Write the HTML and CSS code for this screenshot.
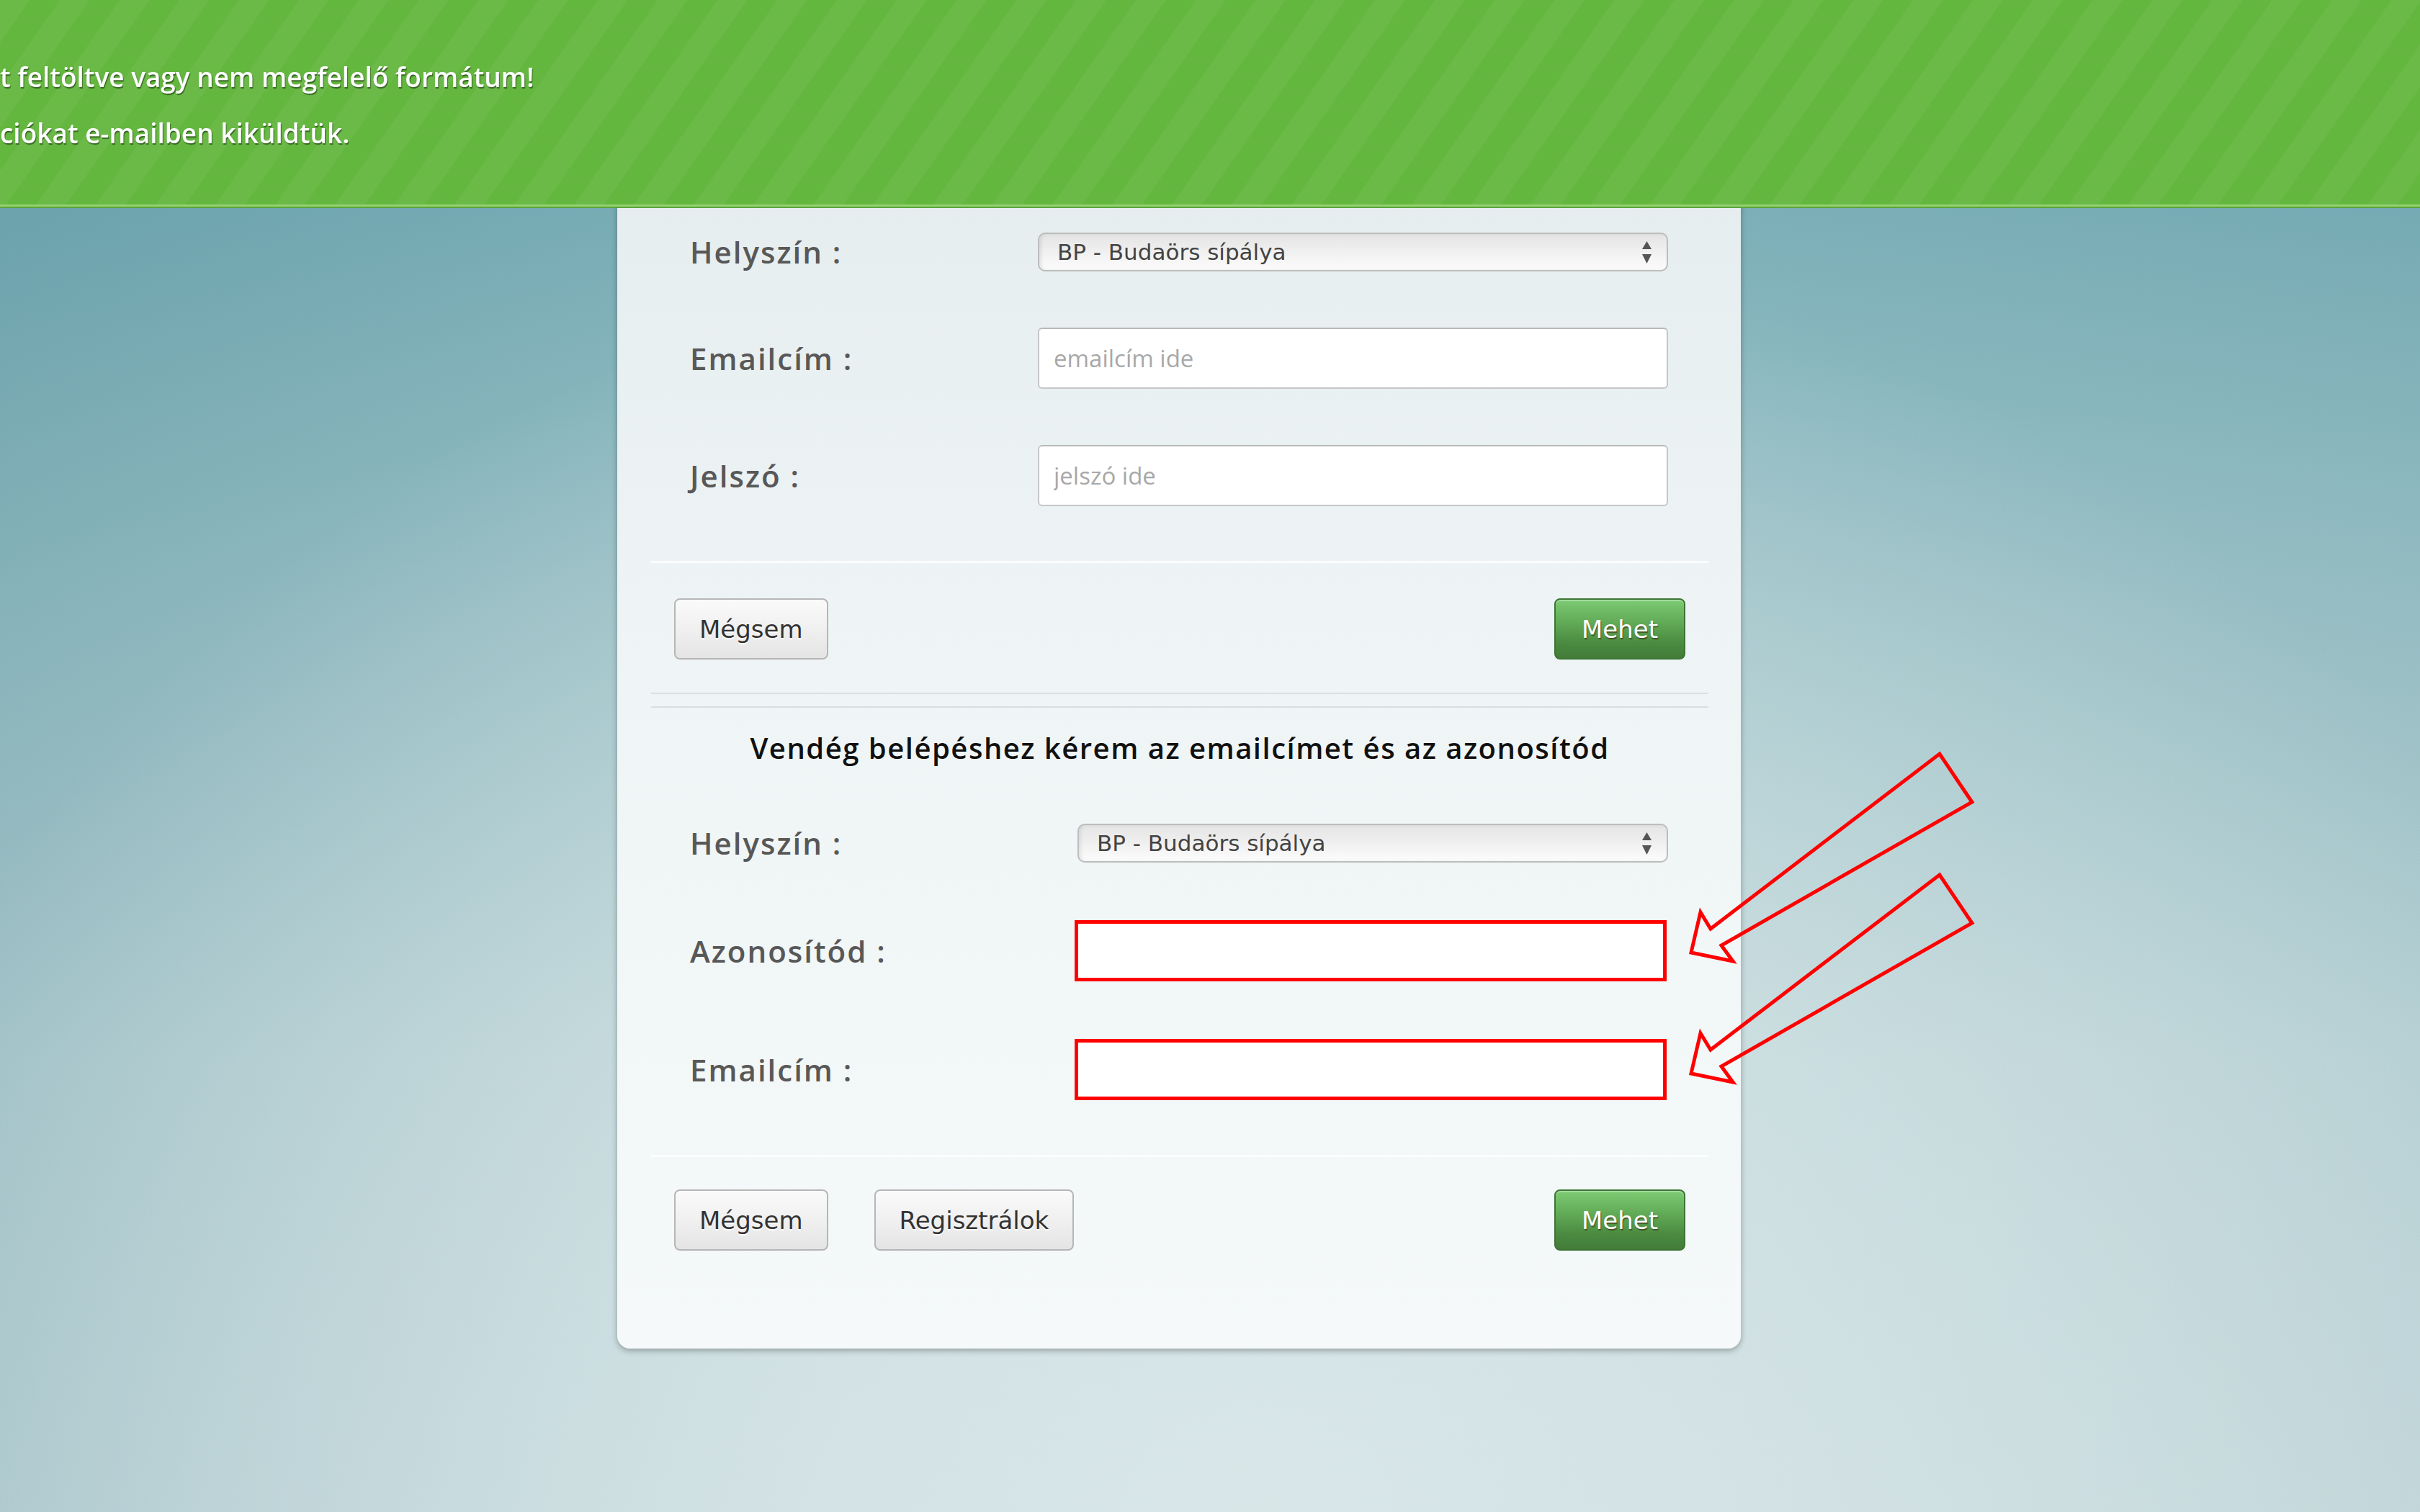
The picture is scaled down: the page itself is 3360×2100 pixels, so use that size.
FILE: index.html
```html
<!DOCTYPE html>
<html>
  <head>
    <meta charset="UTF-8" />
    <title>Belépés</title>
    <link rel="stylesheet" href="styles.css">
  </head>
  <body>
    <!--the notice bar sits over the top of the page-->
    <div class="notice">
      <p>t feltöltve vagy nem megfelelő formátum!</p>
      <p>ciókat e-mailben kiküldtük.</p>
    </div>

    <div class="card">
      <!--normal login-->
      <form class="login">
        <div class="rows">
          <div class="row">
            <label>Helyszín :</label>
            <div class="select">
              <select><option>BP - Budaörs sípálya</option></select>
              <svg class="updown" width="13" height="31" viewBox="0 0 13 31"><path d="M6.5 0 L13 11 L0 11 Z M0 18 L13 18 L6.5 31 Z" fill="#555"/></svg>
            </div>
          </div>
          <div class="row">
            <label>Emailcím :</label>
            <input class="text" type="text" placeholder="emailcím ide" />
          </div>
          <div class="row">
            <label>Jelszó :</label>
            <input class="text" type="password" placeholder="jelszó ide" />
          </div>
        </div>
        <div class="rule"></div>
        <div class="actions">
          <button type="button" class="btn">Mégsem</button>
          <button type="button" class="btn go">Mehet</button>
        </div>
      </form>

      <div class="split"></div>

      <!--guest login-->
      <form class="guest">
        <h2>Vendég belépéshez kérem az emailcímet és az azonosítód</h2>
        <div class="rows">
          <div class="row">
            <label>Helyszín :</label>
            <div class="select">
              <select><option>BP - Budaörs sípálya</option></select>
              <svg class="updown" width="13" height="31" viewBox="0 0 13 31"><path d="M6.5 0 L13 11 L0 11 Z M0 18 L13 18 L6.5 31 Z" fill="#555"/></svg>
            </div>
          </div>
          <div class="row">
            <label>Azonosítód :</label>
            <input class="text marked" type="text" />
          </div>
          <div class="row">
            <label>Emailcím :</label>
            <input class="text marked" type="text" />
          </div>
        </div>
        <div class="rule"></div>
        <div class="actions">
          <button type="button" class="btn">Mégsem</button>
          <button type="button" class="btn">Regisztrálok</button>
          <button type="button" class="btn go">Mehet</button>
        </div>
      </form>
    </div>

    <!--hand drawn arrows pointing at the two guest fields-->
    <svg class="arrows" width="430" height="500" viewBox="0 0 430 500">
      <polygon points="18,293 31,237 45,260 363,17 408,84 60,283 76,305" />
      <polygon points="18,461 31,405 45,428 363,185 408,252 60,451 76,473" />
    </svg>
  </body>
</html>
```

FILE: styles.css
```css
    body {
      margin: 0;
      height: 2100px;
      overflow: hidden;
      font-family: "Open Sans", sans-serif;
      background:
        radial-gradient(ellipse 60% 85% at 52% 100%, rgba(216, 230, 232, 1) 0%, rgba(216, 230, 232, 0) 100%),
        linear-gradient(90deg, rgba(40, 110, 125, 0.2) 0%, rgba(40, 110, 125, 0) 35%, rgba(40, 110, 125, 0) 70%, rgba(40, 110, 125, 0.08) 100%),
        linear-gradient(180deg, #6aa5b0 0%, #9ec3c8 40%, #bfd6d9 70%, #cadcdf 100%);
    }

    /* green notice bar over the top */
    .notice {
      position: fixed;
      top: 0;
      left: 0;
      right: 0;
      height: 287px;
      padding-top: 68px;
      box-sizing: border-box;
      z-index: 5;
      background-color: #63b63e;
      background-image: repeating-linear-gradient(
        125deg,
        rgba(255, 255, 255, 0.05) 0px,
        rgba(255, 255, 255, 0.05) 34px,
        rgba(255, 255, 255, 0) 34px,
        rgba(255, 255, 255, 0) 68px
      );
      border-bottom: 3px solid #93d06f;
      box-shadow: 0 2px 0 #5aa63a;
    }
    .notice p {
      margin: 0;
      font-size: 37px;
      line-height: 78px;
      font-weight: 600;
      color: #fff;
      text-shadow: 1px 2px 1px rgba(0, 0, 0, 0.45);
    }

    /* the login box */
    .card {
      width: 1560px;
      margin-left: 857px;
      padding: 0 45px 136px 47px;
      box-sizing: border-box;
      background: linear-gradient(180deg, #e1eaec 0%, #eef4f5 45%, #f5f9f9 100%);
      border-radius: 0 0 18px 18px;
      box-shadow: 0 3px 8px rgba(0, 0, 0, 0.3);
    }
    .login {
      padding-top: 323px;
    }
    .rows {
      display: flex;
      flex-direction: column;
      gap: 78px;
    }
    .row {
      display: flex;
      align-items: center;
    }
    .row label {
      width: 537px;
      padding-left: 54px;
      box-sizing: border-box;
      font-size: 42px;
      line-height: 50px;
      font-weight: 600;
      letter-spacing: 2px;
      color: #585858;
    }
    .guest .row label {
      width: 592px;
    }

    .select {
      position: relative;
      width: 875px;
    }
    .guest .select {
      width: 820px;
    }
    .select select {
      display: block;
      appearance: none;
      -webkit-appearance: none;
      width: 100%;
      height: 54px;
      padding: 0 0 0 25px;
      font-family: "DejaVu Sans", sans-serif;
      font-size: 31px;
      color: #444;
      border: 2px solid #bdbdbd;
      border-radius: 10px;
      background: linear-gradient(180deg, #e4e4e4 0%, #f0f0f0 50%, #fcfcfc 100%);
      box-shadow: inset 3px 0 4px rgba(0, 0, 0, 0.08);
    }
    .updown {
      position: absolute;
      right: 23px;
      top: 12px;
    }

    .text {
      width: 875px;
      height: 85px;
      box-sizing: border-box;
      padding: 0 20px;
      font-family: "Open Sans", sans-serif;
      font-size: 33px;
      color: #333;
      background: #fff;
      border: 2px solid #c6c6c6;
      border-top-color: #b8b8b8;
      border-radius: 6px;
    }
    .text::placeholder {
      color: #a8a8a8;
    }
    .guest .text {
      width: 822px;
      margin-left: -4px;
    }
    /* red marks around the guest fields */
    .text.marked {
      border: 5px solid #ff0000;
      border-radius: 0;
    }

    .rule {
      height: 3px;
      margin-top: 76px;
      background: #fbfdfd;
    }
    .actions {
      display: flex;
      gap: 64px;
      margin-top: 49px;
      padding: 0 32px;
    }
    .guest .actions {
      margin-top: 45px;
    }
    .btn {
      height: 85px;
      padding: 0 33px;
      font-family: "DejaVu Sans", sans-serif;
      font-size: 34px;
      color: #333;
      border: 2px solid #b6b6b6;
      border-radius: 8px;
      background: linear-gradient(180deg, #fafafa 0%, #f0f0f0 50%, #e4e4e4 100%);
      text-shadow: 0 2px 0 #fff;
      cursor: pointer;
    }
    .btn.go {
      margin-left: auto;
      padding: 0 36px;
      color: #fff;
      border-color: #3d7534;
      background: linear-gradient(180deg, #7ccb73 0%, #5ea553 45%, #4a8a40 75%, #437c39 100%);
      box-shadow: inset 0 2px 0 rgba(255, 255, 255, 0.3);
      text-shadow: 1px 2px 1px rgba(60, 40, 10, 0.6);
    }

    /* double grey line between the two forms */
    .split {
      margin-top: 46px;
      height: 21px;
      border-top: 2px solid #dcdede;
      border-bottom: 2px solid #dcdede;
      box-sizing: border-box;
    }

    .guest h2 {
      margin: 28px 0 0;
      font-size: 40px;
      line-height: 56px;
      font-weight: 600;
      letter-spacing: 1.5px;
      color: #111;
      text-align: center;
    }
    .guest .rows {
      margin-top: 77px;
      gap: 80px;
    }

    .arrows {
      position: absolute;
      left: 2330px;
      top: 1030px;
    }
    .arrows polygon {
      fill: none;
      stroke: #ff0000;
      stroke-width: 5;
      stroke-linejoin: miter;
    }
```
